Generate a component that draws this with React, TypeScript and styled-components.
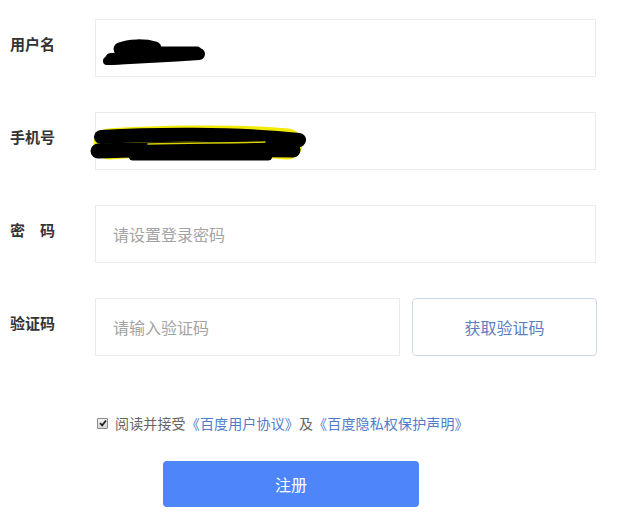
import React from 'react';
import styled, { createGlobalStyle } from 'styled-components';

const GlobalStyle = createGlobalStyle`
  body {
    margin: 0;
    background: #fff;
    font-family: "Noto Sans CJK SC", "Noto Sans", sans-serif;
  }
`;

const Form = styled.form`
  width: 635px;
  box-sizing: border-box;
  padding: 19px 0 0 10px;
  display: flex;
  flex-direction: column;
`;

const Fields = styled.div`
  display: flex;
  flex-direction: column;
  gap: 35px;
`;

const Row = styled.div`
  display: flex;
  align-items: flex-start;
  height: 58px;
`;

const Label = styled.label`
  width: 85px;
  flex: none;
  padding-top: 15px;
  font-size: 15px;
  line-height: 20px;
  font-weight: 700;
  color: #333;
`;

const Field = styled.div<{ $width?: number }>`
  position: relative;
  width: ${(p) => p.$width ?? 501}px;
  height: 58px;
  box-sizing: border-box;
  border: 1px solid #ebebeb;
  display: flex;
  align-items: center;
  padding-left: 17px;
`;

const Input = styled.input`
  border: none;
  outline: none;
  background: transparent;
  width: 100%;
  font-family: inherit;
  font-size: 16px;
  color: #333;
  padding: 0;

  &::placeholder {
    color: #a3a3a3;
  }
`;

const Redaction = styled.svg`
  position: absolute;
  left: -3px;
  top: 0;
  overflow: visible;
`;

const CodeButton = styled.button`
  margin-left: 12px;
  width: 185px;
  height: 58px;
  box-sizing: border-box;
  border: 1px solid #cdd9ea;
  border-radius: 4px;
  background: #fff;
  font-family: inherit;
  font-size: 16px;
  color: #5b7ec0;
  cursor: pointer;
`;

const Agreement = styled.div`
  margin: 57px 0 0 87px;
  display: flex;
  align-items: center;
  font-size: 14px;
  line-height: 20px;
  letter-spacing: 0.15px;
  color: #666;
`;

const Check = styled.span`
  width: 11px;
  height: 11px;
  box-sizing: border-box;
  border: 1px solid #8a8a8a;
  border-radius: 1px;
  background: linear-gradient(#f4f4f4, #d8d8d8);
  display: flex;
  align-items: center;
  justify-content: center;
  margin-right: 7px;
`;

const Link = styled.a`
  color: #4f7cc9;
  text-decoration: none;
`;

const Submit = styled.button`
  margin: 28px 0 0 153px;
  width: 256px;
  height: 46px;
  border: none;
  border-radius: 4px;
  background: #4e85f9;
  color: #fff;
  font-family: inherit;
  font-size: 16px;
  cursor: pointer;
`;

const ScribbleName = () => (
  <Redaction width="120" height="58">
    <g stroke="#000" strokeLinecap="round" strokeLinejoin="round" fill="none">
      <path d="M27 29 C 36 25, 52 25, 62 28" strokeWidth="13" />
      <path d="M18 39 C 40 38, 75 36, 106 34" strokeWidth="12" />
      <path d="M55 31 L 104 31" strokeWidth="9" />
      <path d="M14 41 L 30 40" strokeWidth="8" />
    </g>
  </Redaction>
);

const ScribblePhone = () => (
  <Redaction width="220" height="58">
    <g strokeLinecap="round" strokeLinejoin="round" fill="none">
      <path d="M16 31 C 60 28, 140 26, 194 31" stroke="#f2ea00" strokeWidth="31" />
      <path d="M8 24 C 60 21, 140 20, 206 27" stroke="#000" strokeWidth="14" />
      <path d="M5 38 C 60 36, 140 36, 200 37" stroke="#000" strokeWidth="15" />
      <path d="M55 31 C 100 30, 140 30, 172 29" stroke="#d8d000" strokeWidth="1.5" />
      <path d="M40 43 L 175 43" stroke="#000" strokeWidth="9" />
    </g>
  </Redaction>
);

const CheckMark = () => (
  <svg width="8" height="8" viewBox="0 0 8 8">
    <path d="M1 4.2 L3.2 6.3 L7 1.5" stroke="#222" strokeWidth="1.8" fill="none" />
  </svg>
);

export default function App() {
  return (
    <>
      <GlobalStyle />
      <Form onSubmit={(e) => e.preventDefault()}>
        <Fields>
          <Row>
            <Label>用户名</Label>
            <Field>
              <ScribbleName />
            </Field>
          </Row>
          <Row>
            <Label>手机号</Label>
            <Field>
              <ScribblePhone />
            </Field>
          </Row>
          <Row>
            <Label>密　码</Label>
            <Field>
              <Input type="password" placeholder="请设置登录密码" />
            </Field>
          </Row>
          <Row>
            <Label>验证码</Label>
            <Field $width={305}>
              <Input placeholder="请输入验证码" />
            </Field>
            <CodeButton type="button">获取验证码</CodeButton>
          </Row>
        </Fields>
        <Agreement>
          <Check>
            <CheckMark />
          </Check>
          阅读并接受<Link href="#">《百度用户协议》</Link>及<Link href="#">《百度隐私权保护声明》</Link>
        </Agreement>
        <Submit type="submit">注册</Submit>
      </Form>
    </>
  );
}
